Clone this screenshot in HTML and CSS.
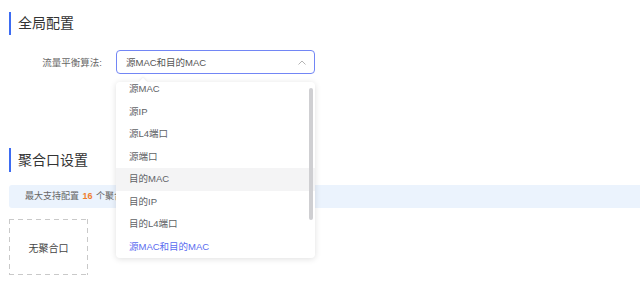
FILE: index.html
```html
<!DOCTYPE html>
<html lang="zh-CN">
<head>
    <meta charset="utf-8">
    <title>全局配置</title>
    <link rel="stylesheet" href="styles.css">
</head>
<body>
    <div class="page">
        <h2 class="section-title">全局配置</h2>
        <div class="form-row">
            <label class="form-label">流量平衡算法:</label>
            <div class="select-wrap">
                <div class="select is-open">
                    <span class="select-value">源MAC和目的MAC</span>
                    <svg class="select-arrow" width="8" height="5" viewBox="0 0 8 5">
                        <path d="M0.5 4.5 L4 1 L7.5 4.5" fill="none" stroke="#b4b4b4" stroke-width="1"/>
                    </svg>
                </div>
                <!-- dropdown, scrolled to the bottom -->
                <div class="dropdown">
                    <span class="dropdown-arrow"></span>
                    <ul class="dropdown-list">
                        <li class="option">源MAC</li>
                        <li class="option">源IP</li>
                        <li class="option">源L4端口</li>
                        <li class="option">源端口</li>
                        <li class="option hover">目的MAC</li>
                        <li class="option">目的IP</li>
                        <li class="option">目的L4端口</li>
                        <li class="option selected">源MAC和目的MAC</li>
                    </ul>
                    <span class="scroll-thumb"></span>
                </div>
            </div>
        </div>

        <h2 class="section-title second">聚合口设置</h2>
        <div class="info-bar">最大支持配置 <b class="count">16</b> 个聚合口</div>
        <div class="empty-box">无聚合口</div>
    </div>
</body>
</html>
```

FILE: styles.css
```css
body {
    margin: 0;
    padding: 0;
    background-color: white;
    font-family: "Liberation Sans", "Noto Sans CJK SC", sans-serif;
    color: #333;
}
.page {
    padding: 12px 0 0 9px;
}
/* Section headers with blue bar */
.section-title {
    margin: 0;
    height: 23px;
    line-height: 23px;
    padding-left: 7px;
    border-left: 2px solid #3d6cf2;
    font-size: 14px;
    font-weight: normal;
    color: #333;
}
.section-title.second {
    margin-top: 74px;
    height: 24px;
    line-height: 24px;
}
.form-row {
    display: flex;
    align-items: center;
    margin-top: 15px;
    height: 24px;
}
.form-label {
    width: 93px;
    text-align: right;
    font-size: 9.5px;
    color: #666;
}
.select-wrap {
    position: relative;
    margin-left: 14px;
}
.select {
    box-sizing: border-box;
    width: 199px;
    height: 24px;
    border: 1px solid #7286f5;
    border-radius: 4px;
    display: flex;
    align-items: center;
    justify-content: space-between;
    padding: 0 8px 0 9px;
    font-size: 9.5px;
    color: #555;
}
.select-arrow {
    display: block;
}
.dropdown {
    position: absolute;
    top: 32px;
    left: 0;
    width: 199px;
    height: 176px;
    background-color: white;
    border-radius: 4px;
    box-shadow: 0 1px 6px rgba(0, 0, 0, 0.13);
    z-index: 10;
}
.dropdown-arrow {
    position: absolute;
    top: -3px;
    left: 24px;
    width: 6px;
    height: 6px;
    background-color: white;
    transform: rotate(45deg);
    box-shadow: -1px -1px 2px rgba(0, 0, 0, 0.05);
}
.dropdown-list {
    list-style: none;
    margin: 0;
    padding: 0;
    height: 176px;
    overflow: hidden;
    border-radius: 4px;
    position: relative;
}
/* scrolled a little down */
.dropdown-list .option:first-child {
    margin-top: -4px;
}
.option {
    height: 22.5px;
    line-height: 22.5px;
    padding-left: 13px;
    font-size: 9.5px;
    color: #606266;
}
.option.hover {
    background-color: #f4f4f5;
}
.option.selected {
    color: #5a6cf0;
}
.scroll-thumb {
    position: absolute;
    top: 6px;
    right: 2px;
    width: 4px;
    height: 132px;
    border-radius: 2px;
    background-color: #cfcfd2;
}
.info-bar {
    margin-top: 13px;
    height: 23px;
    line-height: 23px;
    padding-left: 16px;
    background-color: #ebf3fd;
    border-radius: 3px 0 0 3px;
    font-size: 9px;
    color: #666;
}
.count {
    color: #f07d2e;
    font-weight: bold;
    margin: 0 1px;
}
/* Dashed placeholder card */
.empty-box {
    margin-top: 11px;
    width: 79px;
    height: 56px;
    display: flex;
    align-items: center;
    justify-content: center;
    font-size: 10px;
    color: #444;
    background:
        linear-gradient(90deg, #c9c9c9 60%, transparent 0) top left / 9px 1px repeat-x,
        linear-gradient(90deg, #c9c9c9 60%, transparent 0) bottom left / 9px 1px repeat-x,
        linear-gradient(180deg, #c9c9c9 60%, transparent 0) top left / 1px 9px repeat-y,
        linear-gradient(180deg, #c9c9c9 60%, transparent 0) top right / 1px 9px repeat-y;
}
```
